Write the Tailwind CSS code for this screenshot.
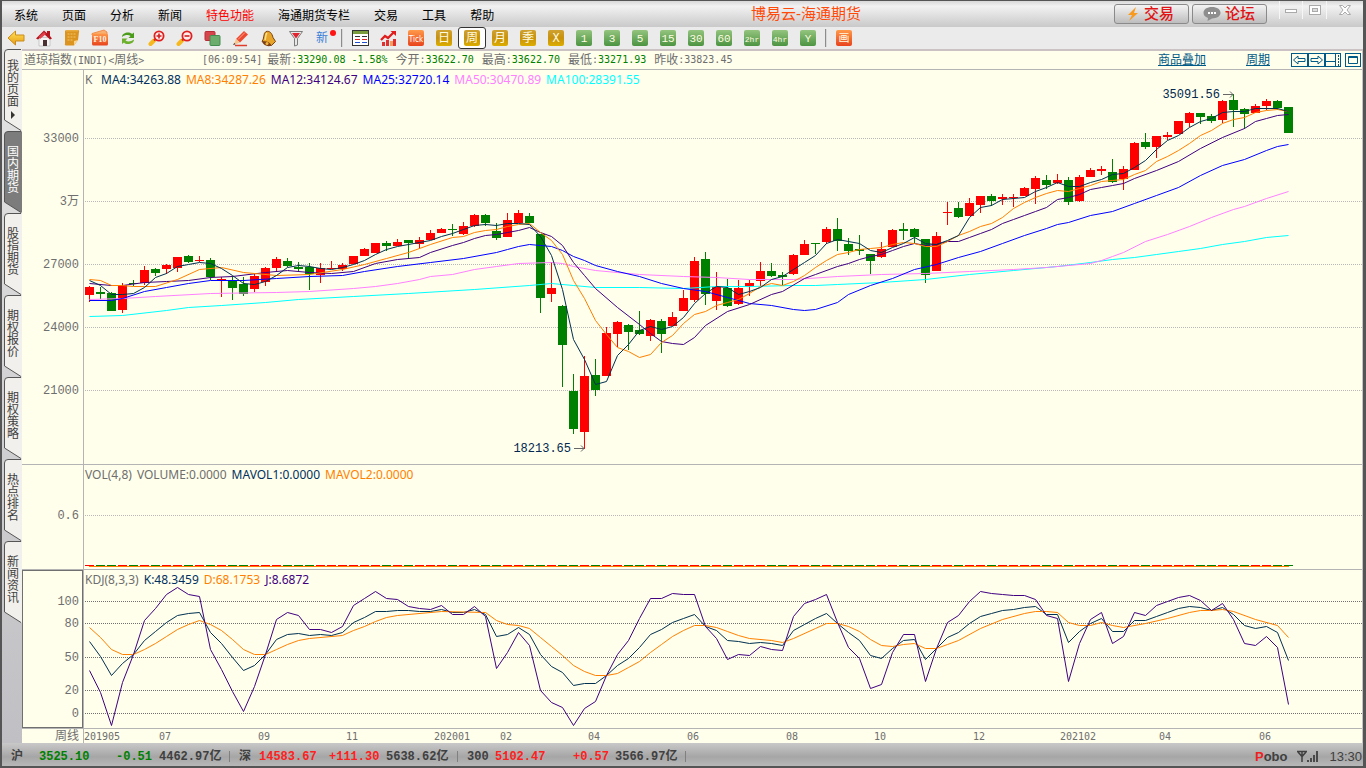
<!DOCTYPE html>
<html lang="zh-CN">
<head>
<meta charset="utf-8">
<title>博易云-海通期货</title>
<script src="https://cdn.jsdelivr.net/npm/@tailwindcss/browser@4"></script>
</head>
<body class="h-screen overflow-hidden bg-[#555] font-['Liberation_Sans','Noto_Sans_CJK_SC',sans-serif] text-xs text-[#6e6e6e]">
<svg class="absolute size-0">
  <defs>
    <linearGradient id="gold" x1="0" y1="0" x2="0" y2="1"><stop offset="0" stop-color="#cfa232"/><stop offset=".5" stop-color="#c8920c"/><stop offset="1" stop-color="#dcae00"/></linearGradient>
    <linearGradient id="leaf" x1="0" y1="0" x2="0" y2="1"><stop offset="0" stop-color="#94c47e"/><stop offset="1" stop-color="#4c9442"/></linearGradient>
    <linearGradient id="fire" x1="0" y1="0" x2="0" y2="1"><stop offset="0" stop-color="#ff9a4a"/><stop offset="1" stop-color="#e8431c"/></linearGradient>
    <linearGradient id="amber" x1="0" y1="0" x2="0" y2="1"><stop offset="0" stop-color="#ffe45a"/><stop offset="1" stop-color="#e89a10"/></linearGradient>
  </defs>
</svg>
<div class="flex h-full flex-col border-2 border-t-[1px] border-[#555] bg-[#ebebeb] border-r-[3px]">

  <!-- menu bar -->
  <header class="flex h-[26px] shrink-0 items-stretch bg-linear-to-b from-[#d8d8d8] via-[#f2f2f2] via-20% to-[#c9c9c9] text-black">
    <nav class="flex shrink-0 items-center gap-6 pt-[3px] pl-3">
      <button>系统</button><button>页面</button><button>分析</button><button>新闻</button>
      <button class="text-[#f00]">特色功能</button><button>海通期货专栏</button>
      <button>交易</button><button>工具</button><button>帮助</button>
    </nav>
    <h1 class="flex flex-1 items-center justify-center pl-1 text-[15px] text-[#ff4a0a]">博易云-海通期货</h1>
    <div class="flex shrink-0 items-start justify-end gap-[3px]">
      <button class="mt-[3px] flex h-5 w-[75px] items-center gap-1 rounded-[3px] border border-[#8a8a8a] bg-linear-to-b from-[#f4f4f4] to-[#bdbdbd] pl-[11px] text-[15px] font-medium text-[#e01414]">
        <svg width="14" height="16" viewBox="0 0 14 16"><path d="M10 1 2 9h4l-3 6 9-8H8z" fill="#f79a1e"/></svg>交易</button>
      <button class="mt-[3px] flex h-5 w-[75px] items-center gap-1 rounded-[3px] border border-[#8a8a8a] bg-linear-to-b from-[#f4f4f4] to-[#bdbdbd] pl-[10px] text-[15px] font-medium text-[#e01414]">
        <svg width="18" height="14" viewBox="0 0 18 14"><path d="M9 0c5 0 8.500 2.400 8.500 5.800S14 11.500 9 11.500L4.500 14 5 11C2 10 .5 8.200.5 5.800.5 2.400 4 0 9 0z" fill="#8e8e8e"/><path d="M5 5h2v2H5zM8 5h2v2H8zM11 5h2v2h-2z" fill="#fff"/></svg>论坛</button>
      <div class="ml-[9px] flex h-[18px] w-[84px] items-center">
        <button class="flex h-full w-6 items-center justify-center border-x border-[#f6f6f6]" aria-label="最小化"><svg width="12" height="12" viewBox="0 0 12 12"><rect x=".5" y="5.500" width="11" height="3" fill="#fff" stroke="#aaa"/></svg></button>
        <button class="flex h-full w-6 items-center justify-center border-r border-[#f6f6f6]" aria-label="最大化"><svg width="12" height="12" viewBox="0 0 12 12" stroke="#aaa"><rect x=".5" y="1.500" width="11" height="9" fill="#fff"/><rect x="3.500" y="4.500" width="5" height="3" fill="#ddd"/></svg></button>
        <button class="flex h-full flex-1 items-center justify-center" aria-label="关闭"><svg width="12" height="12" viewBox="0 0 12 12"><path d="M.5 1.500h3L6 4l2.500-2.500h3L8 6l3.500 4.500h-3L6 8l-2.500 2.500h-3L4 6z" fill="#fff" stroke="#aaa"/></svg></button>
      </div>
    </div>
  </header>

  <!-- icon toolbar -->
  <div id="toolbar" class="flex h-[22px] shrink-0 items-center" role="toolbar">
    <button class="flex w-7 justify-center" aria-label="后退"><svg width="18" height="16" viewBox="0 0 18 16"><path d="M1 8 8.500 1v4H17v6H8.500v4z" fill="url(#amber)" stroke="#c98c1c"/></svg></button>
    <button class="flex w-7 justify-center" aria-label="主页"><svg width="18" height="18" viewBox="0 0 18 18"><path d="M4 8.500h11V17H4z" fill="#f4f4f4" stroke="#b8b8b8" stroke-width=".7"/><path d="M1 9.500 9 1.500l3 2.800V2h3v5l2 2.500-2 1L9 5l-6 5.500z" fill="#b4141e"/><path d="M4 7.500 9 3l2 2-6 5z" fill="#e0404a"/><rect x="8" y="11" width="4" height="6" fill="#4a3030"/></svg></button>
    <button class="flex w-7 justify-center" aria-label="便签"><svg width="18" height="18" viewBox="0 0 18 18"><path d="M3 1h12c1 0 1.500 1 1 2l-1 8-4 5.500H3c-1 0-1.500-1-1-2V2z" fill="#dc9420"/><path d="m15 11-4 5.500V12z" fill="#fbd48c"/><path d="M4.500 5h9M4.500 8h9M4.500 11h6" stroke="#f2c468" stroke-dasharray="2 1"/><path d="M3 1h12v1.500H3z" fill="#e8ac40"/></svg></button>
    <button class="flex w-7 justify-center" aria-label="F10资料"><svg width="18" height="18" viewBox="0 0 18 18"><path d="M1 4.500 13 1l3 2v3H1z" fill="#f8b070" stroke="#ee8038" stroke-width=".8"/><rect x="1" y="4.500" width="16" height="12" rx="1.500" fill="url(#fire)"/><text x="9" y="13" text-anchor="middle" font-family="Liberation Serif" font-weight="700" font-size="8" fill="#fff4e0">F10</text></svg></button>
    <button class="flex w-7 justify-center" aria-label="刷新"><svg width="16" height="16" viewBox="0 0 16 16"><path d="M2 7c0-3 3-4.500 6-4.500 2 0 3 .5 4 1.500l2-1.500V8H8.500l2-2C8.500 4.500 5 4.800 2 7z" fill="#4c9c1c"/><path d="M14 9.500c0 3-3 4.500-6 4.500-2 0-3-.5-4-1.500L2 14V8.500h5.500l-2 2c2 1.500 5.500 1.200 8.500-1z" fill="#6cb02c"/></svg></button>
    <button class="flex w-7 justify-center" aria-label="放大"><svg width="17" height="17" viewBox="0 0 17 17"><path d="m2.500 14 3.500-3.500" stroke="#f6b81c" stroke-width="4" stroke-linecap="round"/><path d="m6 10.500 2-2" stroke="#d83020" stroke-width="2"/><circle cx="11" cy="6" r="4.600" fill="#ffecec" stroke="#e02020" stroke-width="1.800"/><path d="M8.500 6h5M11 3.500v5" stroke="#d02020" stroke-width="1.600"/></svg></button>
    <button class="flex w-7 justify-center" aria-label="缩小"><svg width="17" height="17" viewBox="0 0 17 17"><path d="m2.500 14 3.500-3.500" stroke="#f6b81c" stroke-width="4" stroke-linecap="round"/><path d="m6 10.500 2-2" stroke="#d83020" stroke-width="2"/><circle cx="11" cy="6" r="4.600" fill="#ffecec" stroke="#e02020" stroke-width="1.800"/><path d="M8.500 6h5" stroke="#d02020" stroke-width="1.600"/></svg></button>
    <button class="flex w-7 justify-center" aria-label="叠加"><svg width="17" height="17" viewBox="0 0 17 17"><rect x="1" y="1.500" width="10" height="9" rx="1" fill="#d8444c" stroke="#b82c38"/><rect x="6" y="5.500" width="10" height="10" rx="1" fill="#6cac6c" stroke="#448c50"/></svg></button>
    <button class="flex w-7 justify-center" aria-label="画线"><svg width="17" height="17" viewBox="0 0 17 17"><path d="M3 15.500h12" stroke="#e03c2c" stroke-width="1.500"/><path d="m4 9 8-8 4 3.500-8 8z" fill="#ec4a30"/><path d="m4 9 4 3.500L1.500 15z" fill="#f6c48c"/><path d="m2.300 13 1.200 1.200-2.500.8z" fill="#333"/><path d="m13 2.500-7 7" stroke="#ffa088"/></svg></button>
    <button class="flex w-7 justify-center" aria-label="预警"><svg width="17" height="17" viewBox="0 0 17 17"><path d="M6 1.500c4-1 6 2 7 6l2.500 4-4 4L2 11.500C4.500 9 3 3 6 1.500z" fill="#e8a428" stroke="#7a4410"/><path d="M2 11.500c3-1 8 0 9.500 4-3 1.500-8 .5-9.500-4z" fill="#7c3c14"/><circle cx="7" cy="13.500" r="1.500" fill="#f0b840"/><path d="M7 3c-2 2-1 5-2 7" stroke="#ffe48c" stroke-width="1.500" fill="none"/></svg></button>
    <button class="flex w-7 justify-center" aria-label="筛选"><svg width="16" height="17" viewBox="0 0 16 17"><path d="M1.500 1.500h13L9.500 8.500v6.500l-3 1V8.500z" fill="#e8e8e8" stroke="#7c7c7c"/><path d="M4 3h8L8 8.500z" fill="#e02430"/></svg></button>
    <button class="relative flex w-7 items-center justify-center pr-1 text-xs leading-4 text-[#3a80d8]">新<span class="absolute top-0 right-[2px] size-[6px] rounded-full bg-[#ff1414]"></span></button>
    <span class="mx-[3px] h-[18px] w-0 border-x border-l-[#8c8c8c] border-r-[#d8d8d8]"></span>
    <button class="flex w-7 justify-center" aria-label="报价表"><svg width="17" height="16" viewBox="0 0 17 16"><rect x=".5" y=".5" width="16" height="15" fill="#fff" stroke="#333"/><path d="M1 1h15v3H1z" fill="#7a9c3c"/><path d="M3 6.500h5" stroke="#333"/><path d="M10 6.500h5" stroke="#333"/><path d="M3 9.500h5M10 9.500h5" stroke="#e02020"/><path d="M3 12.500h5M10 12.500h5" stroke="#2050d0"/></svg></button>
    <button class="flex w-7 justify-center" aria-label="K线图"><svg width="17" height="17" viewBox="0 0 17 17"><path d="M2 12h3v4H2zM6 10h3v6H6zM13 9h3v7h-3z" fill="#e03030"/><path d="M10 11h3v5h-3z" fill="#f0a060"/><path d="m1 10 4-4 3 2 6-6" stroke="#e01c1c" stroke-width="2.200" fill="none"/><path d="M10.500 1H16v5z" fill="#e01c1c"/></svg></button>
    <button class="flex w-7 justify-center"><svg width="16" height="16" viewBox="0 0 16 16"><rect width="16" height="16" rx="2" fill="url(#fire)"/><text x="8" y="12" text-anchor="middle" font-family="DejaVu Sans Condensed" font-size="8" fill="#fff">Tick</text></svg></button>
  </div>

  <div class="flex min-h-0 flex-1">
    <!-- page tabs -->
    <nav id="tabs" class="flex w-5 shrink-0 flex-col bg-linear-to-b from-[#e4e4e4] to-[#c0c0c4] pl-[2px]"></nav>

    <main class="flex min-w-0 flex-1 flex-col border-t-2 border-r border-[#cbc3c3] bg-[#ffffec]">
      <div class="flex h-[19px] shrink-0 items-center border-b border-[#b4b4b4] pl-[2px]">
        <div class="flex items-center font-['DejaVu_Sans_Mono','Noto_Sans_CJK_SC',monospace] text-[10px]">
          <span class="w-[178px]"><span class="text-xs leading-4">道琼指数</span>(INDI)&lt;<span class="text-xs leading-4">周线</span>&gt;</span>
          <span class="mr-[5px]">[06:09:54]</span>
          <span class="text-xs leading-4">最新</span>:<span class="mr-[6px] text-[#008000]">33290.08</span><span class="mr-2 text-[#008000]">-1.58%</span>
          <span class="text-xs leading-4">今开</span>:<span class="mr-2 text-[#008000]">33622.70</span>
          <span class="text-xs leading-4">最高</span>:<span class="mr-2 text-[#008000]">33622.70</span>
          <span class="text-xs leading-4">最低</span>:<span class="mr-2 text-[#008000]">33271.93</span>
          <span class="text-xs leading-4">昨收</span>:<span>33823.45</span>
        </div>
        <div class="ml-auto flex items-center text-[#005a87]">
          <a href="#" class="mr-10 underline">商品叠加</a>
          <a href="#" class="mr-[21px] underline">周期</a>
          <button aria-label="左移"><svg width="17" height="15" viewBox="0 0 17 15" fill="none" stroke="#005a87"><rect x=".5" y=".5" width="16" height="13" stroke-width="1"/><path d="M2.500 7 7 3v2.500h7v3H7V11z"/></svg></button>
          <button aria-label="右移"><svg width="17" height="15" viewBox="0 0 17 15" fill="none" stroke="#005a87"><rect x=".5" y=".5" width="16" height="13"/><path d="M14.500 7 10 3v2.500H3v3h7V11z"/></svg></button>
          <button aria-label="分栏"><svg width="17" height="15" viewBox="0 0 17 15" fill="none" stroke="#005a87"><rect x=".5" y=".5" width="15" height="13"/><path d="M1 8.500h9M10.500 1v12"/><path d="M13.500 2v11" stroke-dasharray="2 1"/></svg></button>
          <button class="ml-[3px]" aria-label="全屏"><svg width="17" height="15" viewBox="0 0 17 15" fill="none" stroke="#005a87"><rect x=".5" y=".5" width="15" height="13"/><path d="M3.500 3.500h9v7h-9zM3.500 4.500h9"/></svg></button>
        </div>
      </div>

      <section class="grid min-h-0 flex-1 grid-cols-1 grid-rows-1 border-b border-[#b4b4b4]">
        <svg id="price" class="col-start-1 row-start-1 h-full w-full" shape-rendering="crispEdges"></svg>
        <div class="col-start-1 row-start-1 flex h-5 items-center gap-[5px] pl-[63px] font-['Noto_Sans',sans-serif] text-xs">
          <span class="w-[11px]">K</span><span class="text-[#003060]">MA4:34263.88</span><span class="text-[#ff8000]">MA8:34287.26</span><span class="text-[#400080]">MA12:34124.67</span><span class="text-[#0000ff]">MA25:32720.14</span><span class="text-[#ff80ff]">MA50:30470.89</span><span class="text-[#00ffff]">MA100:28391.55</span>
        </div>
      </section>

      <section class="grid h-[105px] shrink-0 grid-cols-1 grid-rows-1 border-b border-[#b4b4b4]">
        <svg id="volume" class="col-start-1 row-start-1 h-full w-full" shape-rendering="crispEdges"></svg>
        <div class="col-start-1 row-start-1 flex h-5 items-center gap-[5px] pl-[63px] font-['Noto_Sans',sans-serif] text-xs">
          <span>VOL(4,8)</span><span>VOLUME:0.0000</span><span class="text-[#003060]">MAVOL1:0.0000</span><span class="text-[#ff8000]">MAVOL2:0.0000</span>
        </div>
      </section>

      <section class="grid h-[159px] shrink-0 grid-cols-1 grid-rows-1 border-b border-[#b4b4b4]">
        <svg id="kdj" class="col-start-1 row-start-1 h-full w-full" shape-rendering="crispEdges"></svg>
        <div class="col-start-1 row-start-1 flex h-5 items-center gap-[5px] pl-[63px] font-['Noto_Sans',sans-serif] text-xs">
          <span>KDJ(8,3,3)</span><span class="text-[#003060]">K:48.3459</span><span class="text-[#ff8000]">D:68.1753</span><span class="text-[#400080]">J:8.6872</span>
        </div>
      </section>

      <svg id="dates" class="h-[14px] w-full shrink-0"></svg>
    </main>
  </div>

  <!-- quotes and connection state -->
  <footer class="flex h-[23px] shrink-0 items-center bg-linear-to-b from-[#c8c8c8] via-[#a6a6a6] via-60% to-[#b8b8b8] pt-1 pl-[9px] font-['Liberation_Mono','Noto_Sans_CJK_SC',monospace] font-bold text-[#404040]">
    <span class="w-7">沪</span><span class="w-[77px] text-[#008000]">3525.10</span><span class="w-[43px] text-[#008000]">-0.51</span><span class="w-[70px]">4462.97亿</span>
    <span class="mr-[9px] h-[11px] border-l border-[#808080]"></span>
    <span class="w-5">深</span><span class="w-[70px] text-[#ff2020]">14583.67</span><span class="w-[57px] text-[#ff2020]">+111.30</span><span class="w-[71px]">5638.62亿</span>
    <span class="mr-[9px] h-[11px] border-l border-[#808080]"></span>
    <span class="w-7">300</span><span class="w-[78px] text-[#ff2020]">5102.47</span><span class="w-[42px] text-[#ff2020]">+0.57</span><span class="w-[70px]">3566.97亿</span>
    <span class="h-[11px] border-l border-[#808080]"></span>
    <span class="ml-auto font-['Liberation_Sans',sans-serif] text-[13px]"><span class="text-[#f02020]">P</span>obo</span>
    <svg class="ml-[10px]" width="22" height="14" viewBox="0 0 22 14" fill="none" stroke="#404040"><path d="M0 1.500h10M1 2l4 4.500L9 2M5 1v11" stroke-width="1.500"/><path d="M11 10v2M14 8v4M17 5v7M20 1v11" stroke-width="1.800"/></svg>
    <span class="mr-[1px] ml-[10px] font-['Liberation_Sans',sans-serif] text-[13px] font-normal">13:30</span>
  </footer>
</div>

<script>
const NS = 'http://www.w3.org/2000/svg';
function el(parent, name, attrs, text) {
  const e = document.createElementNS(NS, name);
  for (const k in attrs) e.setAttribute(k, attrs[k]);
  if (text !== undefined) e.textContent = text;
  parent.appendChild(e);
  return e;
}

/* period buttons */
const toolbar = document.getElementById('toolbar');
const separator = toolbar.querySelector('span.border-x');
function periodButton(label, fill, size, selected) {
  const b = document.createElement('button');
  b.className = selected ? 'flex h-[22px] w-7 items-center justify-center rounded-[3px] border border-[#333] bg-white' : 'flex w-7 justify-center';
  const s = el(b, 'svg', {width: 16, height: 16, viewBox: '0 0 16 16'});
  el(s, 'rect', {width: 16, height: 16, rx: 2, fill: 'url(#' + fill + ')'});
  el(s, 'text', {x: 8, y: 12, 'text-anchor': 'middle', 'font-size': size, fill: '#fffbe0', 'font-family': "'Liberation Mono','Noto Sans CJK SC',monospace"}, label);
  toolbar.appendChild(b);
}
['日', '周', '月', '季', 'X'].forEach(t => periodButton(t, 'gold', 12, t === '周'));
['1', '3', '5', '15', '30', '60'].forEach(t => periodButton(t, 'leaf', 11));
['2hr', '4hr'].forEach(t => periodButton(t, 'leaf', 8));
periodButton('Y', 'leaf', 11);
toolbar.appendChild(separator.cloneNode());
periodButton('画', 'fire', 11);

/* left tabs */
['我的页面', '国内期货', '股指期货', '期权报价', '期权策略', '热点排名', '新闻资讯'].forEach((t, i) => {
  const b = document.createElement('button');
  const on = i === 1;
  b.className = on ? 'grid h-[82px] w-[18px] shrink-0 grid-cols-1 text-white' : 'grid h-[82px] w-[18px] shrink-0 grid-cols-1 text-[#404040]';
  const s = el(b, 'svg', {width: 18, height: 82, viewBox: '0 0 18 82', style: 'grid-area:1/1'});
  el(s, 'path', {d: 'M18 .5H4Q.5.5.5 4v67L17 81.500h1z', fill: on ? '#7c7c7c' : '#f2f0ec'});
  el(s, 'path', {d: 'M17 .5H4Q.5.5.5 4v67L17 81.500', fill: 'none', stroke: '#555'});
  const d = document.createElement('span');
  d.style.gridArea = '1/1';
  d.className = i === 0 ? 'ml-[3px] mt-[11px] w-3 text-xs leading-3' : 'ml-[3px] mt-[15px] w-3 text-xs leading-3';
  d.textContent = t;
  if (i === 0) {
    const a = el(d, 'svg', {width: 5, height: 8, viewBox: '0 0 5 8', style: 'margin:3px 0 0 4px;display:block'});
    el(a, 'path', {d: 'M0 0 4 4 0 8z', fill: '#333'});
  }
  b.appendChild(d);
  document.getElementById('tabs').appendChild(b);
});

/* weekly bars: colour, high, body top, body bottom, low */
const bars = `r286 287 295 302|g287 292 294 299|g292 293 311 311|r283 285 310 313|g280 283 284 286|r266 270 283 285|g268 269 273 276|r264 265 269 274|r257 257 268 272|g255 256 262 263|r256 260 261 262|g258 260 277 280|r277 279 280 297|g276 280 288 300|g277 284 294 296|r274 276 289 292|r267 268 282 286|r257 259 268 271|g258 261 266 267|g262 267 269 272|g263 267 274 290|r263 268 275 283|r261 268 269 269|r263 265 269 271|r256 256 264 264|r248 249 256 256|r243 243 253 253|g241 243 246 251|r239 242 246 246|g240 240 243 258|r237 240 244 248|r230 233 240 240|r228 229 233 233|g224 229 230 236|r222 226 234 235|r214 215 226 227|g214 215 223 226|g223 231 238 240|r213 220 237 237|r210 213 223 223|g213 216 223 223|g234 234 298 313|r262 288 294 302|g305 306 345 387|g374 391 429 434|r356 376 432 449|g359 375 390 396|r327 333 376 376|r321 322 334 347|g324 325 332 350|g311 330 334 335|r319 320 336 341|g319 321 334 353|r312 317 326 326|r290 298 311 311|r257 261 300 302|g252 259 294 305|r272 287 301 310|g279 288 306 307|r280 288 304 305|r280 283 286 296|r262 271 281 286|g263 271 276 277|g272 275 277 285|r254 255 274 275|r240 244 255 255|g243 243 244 254|r227 229 242 244|g218 229 241 251|g238 244 251 255|g235 249 251 255|g254 254 261 274|r242 249 257 258|r229 230 247 247|g223 229 231 240|g228 229 237 243|g239 239 275 283|r232 236 271 271|r202 212 213 225|g202 208 217 218|r198 203 216 216|r196 196 205 213|g194 196 201 206|r194 197 199 205|r194 197 198 207|r187 188 196 196|r176 178 189 204|g175 180 185 189|r174 180 183 184|g177 180 202 205|r175 177 201 202|r168 170 177 177|r166 169 171 175|g159 172 182 183|r166 169 179 190|r142 143 170 170|g133 142 147 149|r136 136 147 158|r132 135 137 140|r121 121 134 134|r112 113 123 127|g113 113 117 124|g114 116 121 123|r100 101 120 123|g94 100 110 127|g108 109 114 129|r104 106 113 113|r99 101 106 110|g100 101 108 110|g107 107 133 133`
  .split('|').map(s => [s[0] === 'r' ? '#ff0000' : '#008000', ...s.slice(1).split(' ').map(Number)]);

const x = i => 67 + i * 11;
function layer(id, top) { return el(document.getElementById(id), 'g', {transform: 'translate(0 ' + -top + ')'}); }
function curve(g, pts, colour) {
  const s = pts.trim().split(/\s+/).map(p => { const [i, y] = p.split(':').map(Number); return (x(i) + .5) + ',' + (y + .5); }).join(' ');
  el(g, 'polyline', {points: s, fill: 'none', stroke: colour, 'stroke-width': 1, 'shape-rendering': 'auto'});
}
const seq = (list, from = 0) => list.trim().split(/\s+/).map((y, i) => (i + from) + ':' + y).join(' ');
function gridLine(g, y, colour) { el(g, 'line', {x1: 63, x2: '100%', y1: y + .5, y2: y + .5, stroke: colour, 'stroke-dasharray': '1 1'}); }
const MONO = "'Liberation Mono','Noto Sans CJK SC',monospace";
function label(g, t, px, y, anchor = 'end', colour = '#6e6e6e') { el(g, 'text', {x: px, y: y + 4, 'text-anchor': anchor, 'font-size': 12, 'font-family': MONO, fill: colour}, t); }
function axisEdge(g) { el(g, 'line', {x1: 61.5, x2: 61.5, y1: 0, y2: 2000, stroke: '#b4b4b4'}); }

/* price panel */
const p = layer('price', 70);
axisEdge(p);
[[138, '33000'], [201, '3万'], [264, '27000'], [327, '24000'], [390, '21000']].forEach(([y, t]) => { gridLine(p, y, '#b8b8b8'); label(p, t, 57, y); });
bars.forEach(([c, hi, top, bottom, low], i) => {
  el(p, 'rect', {x: x(i), y: hi, width: 1, height: Math.max(1, low - hi), fill: c});
  el(p, 'rect', {x: x(i) - 4, y: top, width: 9, height: Math.max(1, bottom - top), fill: c});
});
curve(p, '0:316 3:315 7:310 9:307 12:305 16:302 19:299 24:296 29:293 35:289 40:285 42:283 44:285 46:287 50:287 54:288 57:286 60:286 64:285 66:285 68:284 72:282 76:279 80:274 84:270 88:266 91:262 93:259 95:257 97:254 99:251 101:248 103:244 105:241 107:237 109:235', '#00ffff');
curve(p, '0:299 3:298 6:296 11:293 17:292 20:291 24:288 26:286 28:283 30:279 31:276 33:274 35:269 37:266 39:263 42:262 43:263 44:266 46:270 50:274 54:276 57:277 60:279 64:279 68:276 72:274 76:273 80:271 84:269 87:267 89:265 91:263 92:260 93:256 94:252 96:241 98:234 100:226 102:217 104:209 105:206 107:198 109:191', '#ff80ff');
curve(p, '0:300 2:300 3:298 5:291 7:287 9:283 11:280 14:280 17:278 20:276 23:275 25:271 28:266 31:262 34:258 37:252 38:249 39:246 40:244 41:245 42:246 43:250 44:256 45:260 46:265 48:271 50:276 52:283 54:288 56:291 58:297 60:303 62:305 64:309 65:310 66:309 68:302 69:294 71:285 73:278 75:269 77:264 79:257 81:251 83:243 85:235 87:228 88:224 89:222 91:215 93:211 95:203 97:195 99:187 101:175 103:165 105:159 107:150 108:146 109:144', '#0000ff');
curve(p, '0:283 2:285 3:285 5:282 7:281 9:280 11:277 13:276 16:272 18:270 20:272 22:273 24:271 26:263 28:259 30:257 31:252 33:245 34:242 35:238 36:235 37:234 38:232 39:230 40:227 41:232 42:236 43:245 44:262 45:275 46:288 48:307 50:324 51:333 52:341 53:343 54:344 55:337 56:325 58:311 60:304 62:294 63:291 65:278 66:274 68:266 69:263 70:259 71:256 72:254 73:250 74:246 75:243 76:245 77:244 78:241 79:241 80:237 81:233 82:229 83:223 84:219 85:215 86:211 87:207 88:199 89:197 90:194 91:189 92:187 93:185 94:183 95:178 97:170 99:161 101:148 103:137 105:128 106:121 107:118 108:115 109:114', '#400080');
curve(p, '0:279 1:280 2:285 3:285 4:286 6:286 8:279 10:269 12:267 14:272 17:275 20:274 23:269 25:264 27:258 29:252 31:244 33:237 34:236 35:232 36:230 37:229 38:226 39:224 40:223 41:232 42:240 43:254 44:280 45:298 46:320 47:334 48:347 49:351 50:357 51:354 52:342 53:335 54:323 55:314 56:311 57:305 58:302 59:299 60:293 61:286 62:283 63:285 64:281 65:275 66:267 67:260 68:254 69:252 70:249 71:248 72:247 73:244 74:242 75:243 76:246 77:246 78:241 79:235 80:231 81:226 82:223 83:217 84:208 85:202 86:197 87:193 88:190 89:191 90:188 91:185 92:181 93:180 94:179 95:174 96:170 97:161 98:156 99:150 100:143 101:135 102:130 103:123 104:119 105:117 106:112 107:110 108:109 109:111', '#ff8000');
curve(p, seq('280 285 294 294 293 287 277 273 266 264 262 263 268 275 283 284 281 275 267 265 266 268 269 267 264 260 254 249 246 244 242 240 236 233 229 225 224 225 223 223 224 236 255 289 339 359 384 381 355 344 330 326 329 326 317 303 293 286 287 294 291 287 279 276 269 262 255 243 239 241 243 250 252 247 243 237 243 244 240 235 217 207 205 199 198 197 191 187 182 186 186 182 179 174 173 167 160 149 140 135 127 121 118 112 111 111 108 108 108 111'), '#003050');
function marker(t, right, y) {
  label(p, t, right, y, 'end', '#002850');
  el(p, 'path', {d: 'M' + (right + 3) + ' ' + (y + .5) + 'h10m-3-3 3 3-3 3', fill: 'none', stroke: '#666', 'shape-rendering': 'auto'});
}
marker('35091.56', 1198, 94);
marker('18213.65', 549, 448);

/* volume panel */
const v = layer('volume', 465);
axisEdge(v);
gridLine(v, 515, '#b8b8b8');
label(v, '0.6', 57, 515);
el(v, 'rect', {x: x(0), y: 566, width: x(109) - x(0) + 1, height: 1, fill: '#ff8000'});
bars.forEach((b, i) => el(v, 'rect', {x: x(i) - 4, y: 565, width: 9, height: 1, fill: b[0]}));

/* KDJ panel */
const k = layer('kdj', 570);
el(k, 'rect', {x: .5, y: 570.5, width: 60, height: 157, fill: 'none', stroke: '#707070'});
axisEdge(k);
[[601, '100'], [623, '80'], [657, '50'], [690, '20'], [713, '0']].forEach(([y, t]) => { gridLine(k, y, '#707070'); label(k, t, 57, y); });
curve(k, seq('641 656 675 663 654 640 631 622 615 613 612 632 643 657 670 665 654 639 634 633 635 634 635 632 622 617 611 611 610 610 611 611 609 612 612 609 614 636 634 627 634 654 666 672 685 683 683 675 665 658 647 634 629 622 618 614 626 630 640 641 643 642 643 645 630 624 618 613 623 632 640 655 658 648 640 639 659 648 637 632 623 616 613 610 609 607 606 614 614 642 631 623 618 631 631 620 620 616 612 608 606 607 610 607 614 625 628 626 632 660'), '#003050');
curve(k, '0:627 1:637 2:649 3:654 4:654 5:649 6:643 7:636 8:629 9:624 10:620 11:624 12:630 13:639 14:649 15:654 16:654 17:649 18:644 19:640 20:638 23:635 24:630 25:626 26:621 27:617 28:615 32:611 36:612 37:620 38:624 39:625 40:628 41:637 42:646 43:655 44:665 45:671 46:675 47:675 48:673 49:667 50:661 51:652 52:644 53:636 54:630 55:625 56:625 57:627 58:631 59:635 60:638 62:640 63:642 64:638 66:628 67:623 68:623 69:626 70:631 71:639 72:645 73:646 74:644 75:643 76:648 77:648 78:644 79:640 81:628 83:619 85:613 86:611 87:611 88:612 89:622 90:625 91:625 92:622 93:625 94:627 96:623 98:618 100:612 101:610 102:610 103:609 104:611 106:619 108:625 109:637', '#ff8000');
curve(k, seq('670 692 725 682 654 620 608 594 587 594 596 649 669 691 711 686 654 619 612 615 629 629 632 626 605 598 591 598 599 606 608 609 605 614 614 606 616 668 652 632 645 690 702 707 725 708 701 675 654 640 618 598 598 593 594 594 626 638 659 654 655 646 649 650 616 603 599 594 622 647 658 688 684 652 634 634 681 648 622 615 601 591 593 594 595 595 599 615 618 681 643 619 612 643 636 612 615 605 601 597 595 600 610 603 619 643 645 636 647 704'), '#400080');

/* date axis */
const d = document.getElementById('dates');
axisEdge(d);
label(d, '周线', 57, 7);
[[62, '201905'], [137, '07'], [236, '09'], [324, '11'], [412, '202001'], [478, '02'], [566, '04'], [665, '06'], [764, '08'], [852, '10'], [951, '12'], [1038, '202102'], [1137, '04'], [1237, '06']]
  .forEach(([px, t]) => el(d, 'text', {x: px, y: 11, 'font-size': 10, 'font-family': "'DejaVu Sans Mono',monospace", fill: '#6e6e6e'}, t));
</script>
</body>
</html>
